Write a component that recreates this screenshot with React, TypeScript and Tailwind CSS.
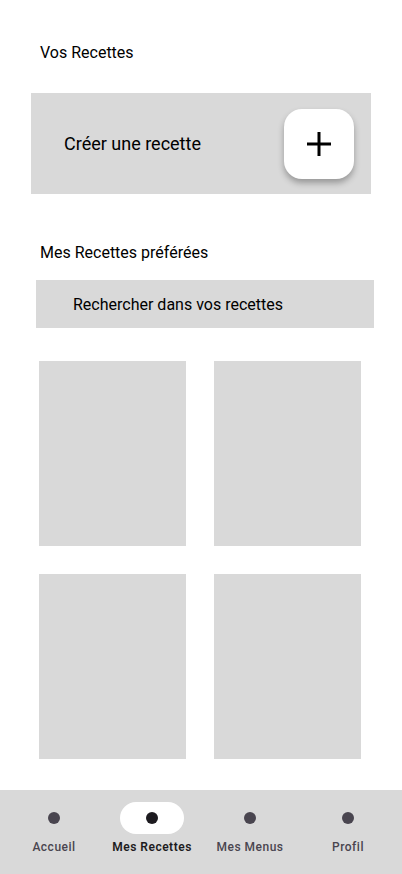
import React from "react";

const navItems = [
  { label: "Accueil", active: false },
  { label: "Mes Recettes", active: true },
  { label: "Mes Menus", active: false },
  { label: "Profil", active: false },
];

export default function App() {
  return (
    <div
      className="w-[402px] h-[874px] bg-white flex flex-col overflow-hidden text-black"
      style={{ fontFamily: "Roboto, 'Liberation Sans', sans-serif" }}
    >
      <div className="flex-1 flex flex-col">
        <h2 className="pt-[41px] pl-[40px] text-[16px] leading-[24px] font-normal">Vos Recettes</h2>
        <div className="mt-[28px] ml-[31px] w-[340px] h-[101px] bg-[#d9d9d9] flex items-center justify-between pl-[33px] pr-[17px]">
          <span className="text-[18px] leading-[24px]">Créer une recette</span>
          <button className="w-[70px] h-[70px] rounded-[18px] bg-white flex items-center justify-center shadow-[0_4px_6px_rgba(0,0,0,0.3)]">
            <svg width="26" height="26" viewBox="0 0 26 26">
              <path d="M13 1v24M1 13h24" stroke="#000" strokeWidth="3" fill="none" />
            </svg>
          </button>
        </div>
        <h2 className="mt-[47px] pl-[40px] text-[16px] leading-[24px] font-normal">Mes Recettes préférées</h2>
        <div className="mt-[15px] ml-[36px] w-[338px] h-[48px] bg-[#d9d9d9] flex items-center pl-[37px] pt-[2px]">
          <span className="text-[16px] leading-[24px]">Rechercher dans vos recettes</span>
        </div>
        <div className="mt-[33px] ml-[39px] grid grid-cols-[147px_147px] gap-x-[28px] gap-y-[28px]">
          <div className="h-[185px] bg-[#d9d9d9]" />
          <div className="h-[185px] bg-[#d9d9d9]" />
          <div className="h-[185px] bg-[#d9d9d9]" />
          <div className="h-[185px] bg-[#d9d9d9]" />
        </div>
      </div>
      <nav className="h-[84px] bg-[#d9d9d9] flex px-[5px] pt-[12px]">
        {navItems.map((it) => (
          <div key={it.label} className="flex-1 flex flex-col items-center gap-[5px]">
            <div
              className={
                it.active
                  ? "w-[64px] h-[32px] rounded-full bg-white flex items-center justify-center"
                  : "w-[64px] h-[32px] rounded-full flex items-center justify-center"
              }
            >
              <div className={it.active ? "w-[12px] h-[12px] rounded-full bg-[#1d1b20]" : "w-[12px] h-[12px] rounded-full bg-[#49454f]"} />
            </div>
            <span
              className={
                it.active
                  ? "text-[12px] leading-[16px] font-semibold tracking-[0.5px] text-[#1d1b20]"
                  : "text-[12px] leading-[16px] font-medium tracking-[0.5px] text-[#49454f]"
              }
            >
              {it.label}
            </span>
          </div>
        ))}
      </nav>
    </div>
  );
}
